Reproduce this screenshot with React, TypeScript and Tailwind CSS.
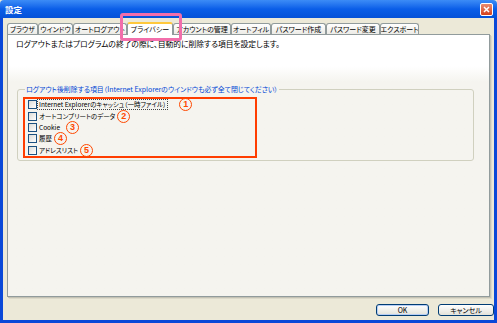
import React from 'react';

const tabs = [
  { label: 'ブラウザ', w: 'w-[31px]' },
  { label: 'ウインドウ', w: 'w-[35px]' },
  { label: 'オートログアウト', w: 'w-[54px]' },
  { label: 'プライバシー', w: 'w-[46px]', active: true },
  { label: 'アカウントの管理', w: 'w-[58px]' },
  { label: 'オートフィル', w: 'w-[40px]' },
  { label: 'パスワード作成', w: 'w-[55px]' },
  { label: 'パスワード変更', w: 'w-[54px]' },
  { label: 'エクスポート', w: 'w-[39px]' },
];

const items = [
  { label: 'Internet Explorerのキャッシュ（一時ファイル）', n: '1', gap: 'ml-[12px]', focus: true },
  { label: 'オートコンプリートのデータ', n: '2', gap: 'ml-[1px]' },
  { label: 'Cookie', n: '3', gap: 'ml-[5px]' },
  { label: '履歴', n: '4', gap: 'ml-[1px]' },
  { label: 'アドレスリスト', n: '5', gap: 'ml-[1px]' },
];

const Circle: React.FC<{ n: string; className?: string }> = ({ n, className }) => (
  <span
    className={`inline-flex items-center justify-center w-[13px] h-[13px] shrink-0 rounded-full border-[1.5px] border-[#ff4800] text-[#ff4800] text-[9px] font-bold leading-none font-['Liberation_Sans',sans-serif] ${className}`}
  >
    {n}
  </span>
);

const XpButton: React.FC<{ label: string; w: string; def?: boolean }> = ({ label, w, def }) => (
  <button
    className={`${w} h-[12px] rounded-[3px] border border-[#003c74] bg-linear-to-b from-white to-[#e3e2da] text-[7px] leading-none text-black ${
      def ? 'shadow-[inset_0_0_0_1px_#b6cdf5]' : ''
    }`}
  >
    {label}
  </button>
);

export default function App() {
  return (
    <div className="relative w-[497px] h-[323px] flex flex-col overflow-hidden bg-[#ece9d8] font-['Noto_Sans_CJK_JP',sans-serif] [font-feature-settings:'palt']">
      {/* title bar */}
      <div className="h-[18px] shrink-0 flex items-center justify-between pl-[5px] pr-[4px] rounded-t-[4px] bg-linear-to-b from-[#3c8cf6] via-[#0a5ee8] to-[#0552d8]">
        <span className="text-white text-[8.5px] font-bold leading-none">設定</span>
        <div className="w-[13px] h-[13px] rounded-[2px] border border-white bg-linear-to-b from-[#e98a6e] to-[#d43f16] flex items-center justify-center">
          <svg width="7" height="7" viewBox="0 0 7 7">
            <path d="M1 1 L6 6 M6 1 L1 6" stroke="white" strokeWidth="1.5" />
          </svg>
        </div>
      </div>

      {/* body */}
      <div className="flex-1 flex flex-col border-x-[3px] border-b-[3px] border-[#0a48d8] pt-[3px]">
        {/* tabs */}
        <div className="h-[13px] flex items-end pl-[4px] relative z-10">
          {tabs.map((t) =>
            t.active ? (
              <div
                key={t.label}
                className={`${t.w} h-[13px] -mb-px flex items-center justify-center bg-white border-x border-[#919b9c] border-t-2 border-t-[#ffc83c] rounded-t-[3px] text-[7px] leading-none whitespace-nowrap overflow-hidden`}
              >
                {t.label}
              </div>
            ) : (
              <div
                key={t.label}
                className={`${t.w} h-[11px] flex items-center justify-center bg-linear-to-b from-white to-[#ecebe6] border-x border-t border-[#919b9c] rounded-t-[3px] text-[7px] leading-none whitespace-nowrap overflow-hidden`}
              >
                {t.label}
              </div>
            )
          )}
        </div>

        {/* panel */}
        <div className="h-[263px] mx-[4px] border border-[#919b9c] shadow-[1px_1px_0_#c4c2b4,2px_2px_0_#dcd9c9] bg-linear-to-b from-white from-[12%] to-[#f5f4ef] to-[18%] pl-[8px] pt-[4px]">
          <p className="h-[10px] text-[7.75px] leading-[10px] text-black whitespace-nowrap">
            ログアウトまたはプログラムの終了の際に、自動的に削除する項目を設定します。
          </p>

          <fieldset className="ml-[1px] mt-[35px] w-[457px] h-[77px] border border-[#d0d0bf] rounded-[3px] pl-[5px] pt-[3px]">
            <legend className="ml-[2px] px-[1px] h-[10px] text-[6.9px] leading-[10px] text-[#0046d5] whitespace-nowrap">
              ログアウト後削除する項目（Internet Explorerのウインドウも必ず全て閉じてください）
            </legend>

            <div className="w-[234px] h-[61px] border-2 border-[#ff3d00] pl-[3px] flex flex-col">
              {items.map((it) => (
                <div key={it.n} className="h-[11.4px] flex items-center">
                  <span className="w-[9px] h-[9px] shrink-0 border border-[#1c5180] bg-linear-to-br from-[#dcdcd7] to-white" />
                  <span
                    className={`ml-[1px] px-[1px] text-[6.5px] leading-[9px] text-black whitespace-nowrap ${
                      it.focus ? 'outline outline-1 outline-dotted outline-[#444]' : ''
                    }`}
                  >
                    {it.label}
                  </span>
                  <Circle n={it.n} className={it.gap} />
                </div>
              ))}
            </div>
          </fieldset>
        </div>

        {/* buttons */}
        <div className="flex justify-end gap-[9px] pt-[7px] pr-0">
          <XpButton label="OK" w="w-[53px]" def />
          <XpButton label="キャンセル" w="w-[56px]" />
        </div>
      </div>

      {/* pink highlight */}
      <div className="absolute left-[120px] top-[13px] w-[62px] h-[28px] border-[3px] border-[#f26eab] rounded-[3px] z-20" />
    </div>
  );
}
